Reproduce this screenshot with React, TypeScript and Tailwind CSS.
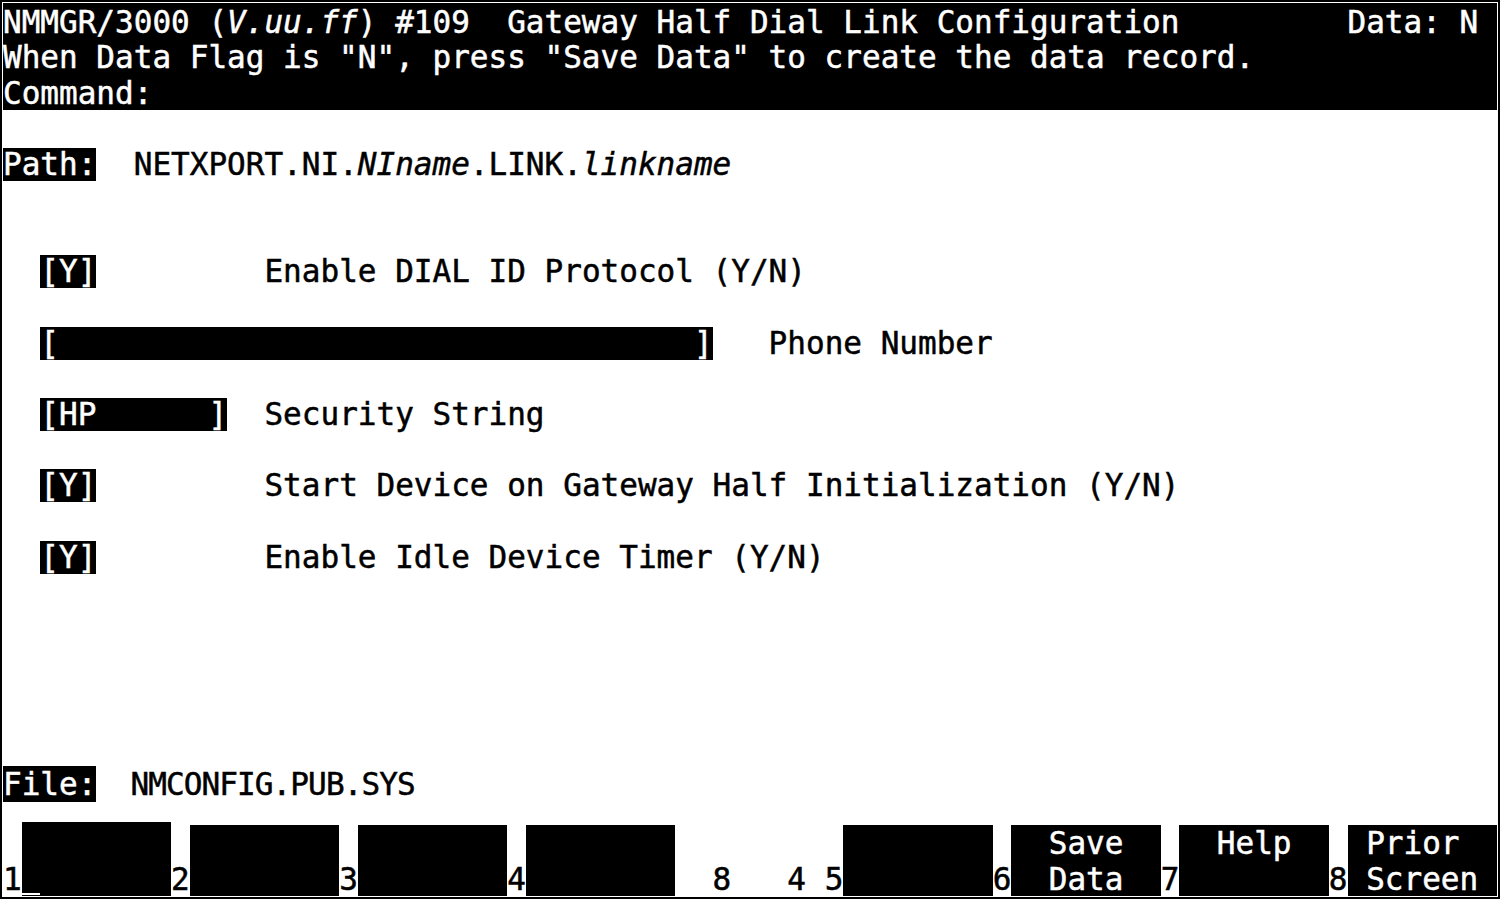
import React from "react";

function Inv({ children }: { children: React.ReactNode }) {
  return (
    <span className="inline-block align-top mt-[1px] h-[33px] leading-[33.66px] bg-black text-white whitespace-pre">
      {children}
    </span>
  );
}

function Row({ children }: { children?: React.ReactNode }) {
  return <div className="h-[35.675px] pt-[1.5px] leading-[35.675px] whitespace-pre">{children}</div>;
}

function It({ children }: { children: React.ReactNode }) {
  return <span className="italic">{children}</span>;
}

function Num({ children }: { children: React.ReactNode }) {
  return (
    <div className="w-[18.675px] shrink-0 h-[35.675px] pt-[1.5px] leading-[35.675px] whitespace-pre">{children}</div>
  );
}

function Key({ text = "" }: { text?: string }) {
  return (
    <div className="w-[149.4px] shrink-0 h-[71.35px] pt-[1.5px] bg-black text-white whitespace-pre leading-[35.675px]">
      {text}
    </div>
  );
}

export default function App() {
  return (
    <div className="w-[1500px] h-[899px] bg-black p-[2px] overflow-hidden">
      <div className="h-full bg-white p-[1px] flex flex-col text-black text-[31.02px] [-webkit-text-stroke:0.5px] font-['DejaVu_Sans_Mono','Liberation_Mono',monospace]">
        <div className="bg-black text-white">
          <Row>
            {"NMMGR/3000 ("}
            <It>V.uu.ff</It>
            {") #109  Gateway Half Dial Link Configuration         Data: N"}
          </Row>
          <Row>{'When Data Flag is "N", press "Save Data" to create the data record.'}</Row>
          <Row>{"Command:"}</Row>
        </div>
        <Row />
        <Row>
          <Inv>Path:</Inv>
          {"  NETXPORT.NI."}
          <It>NIname</It>
          {".LINK."}
          <It>linkname</It>
        </Row>
        <Row />
        <Row />
        <Row>
          {"  "}
          <Inv>[Y]</Inv>
          {"         Enable DIAL ID Protocol (Y/N)"}
        </Row>
        <Row />
        <Row>
          {"  "}
          <Inv>{"[" + " ".repeat(34) + "]"}</Inv>
          {"   Phone Number"}
        </Row>
        <Row />
        <Row>
          {"  "}
          <Inv>{"[HP      ]"}</Inv>
          {"  Security String"}
        </Row>
        <Row />
        <Row>
          {"  "}
          <Inv>[Y]</Inv>
          {"         Start Device on Gateway Half Initialization (Y/N)"}
        </Row>
        <Row />
        <Row>
          {"  "}
          <Inv>[Y]</Inv>
          {"         Enable Idle Device Timer (Y/N)"}
        </Row>
        <div className="flex-1" />
        <div className="h-[35.675px] pt-[1.5px] leading-[35.675px] whitespace-pre mb-[23.3px]">
          <span className="bg-black text-white">File:</span>
          <span className="ml-[34px] tracking-[-0.9px]">NMCONFIG.PUB.SYS</span>
        </div>
        <div className="flex items-end h-[71.35px]">
          <Num>1</Num>
          <div className="relative w-[149.4px] shrink-0 h-[74.35px] bg-black">
            <div className="absolute left-0 bottom-[1px] w-[18.675px] h-[2px] bg-white" />
          </div>
          <Num>2</Num>
          <Key />
          <Num>3</Num>
          <Key />
          <Num>4</Num>
          <Key />
          <div className="w-[168.075px] shrink-0 h-[35.675px] pt-[1.5px] leading-[35.675px] whitespace-pre">{"  8   4 5"}</div>
          <Key />
          <Num>6</Num>
          <Key text={"  Save\n  Data"} />
          <Num>7</Num>
          <Key text={"  Help"} />
          <Num>8</Num>
          <Key text={" Prior\n Screen"} />
        </div>
      </div>
    </div>
  );
}
